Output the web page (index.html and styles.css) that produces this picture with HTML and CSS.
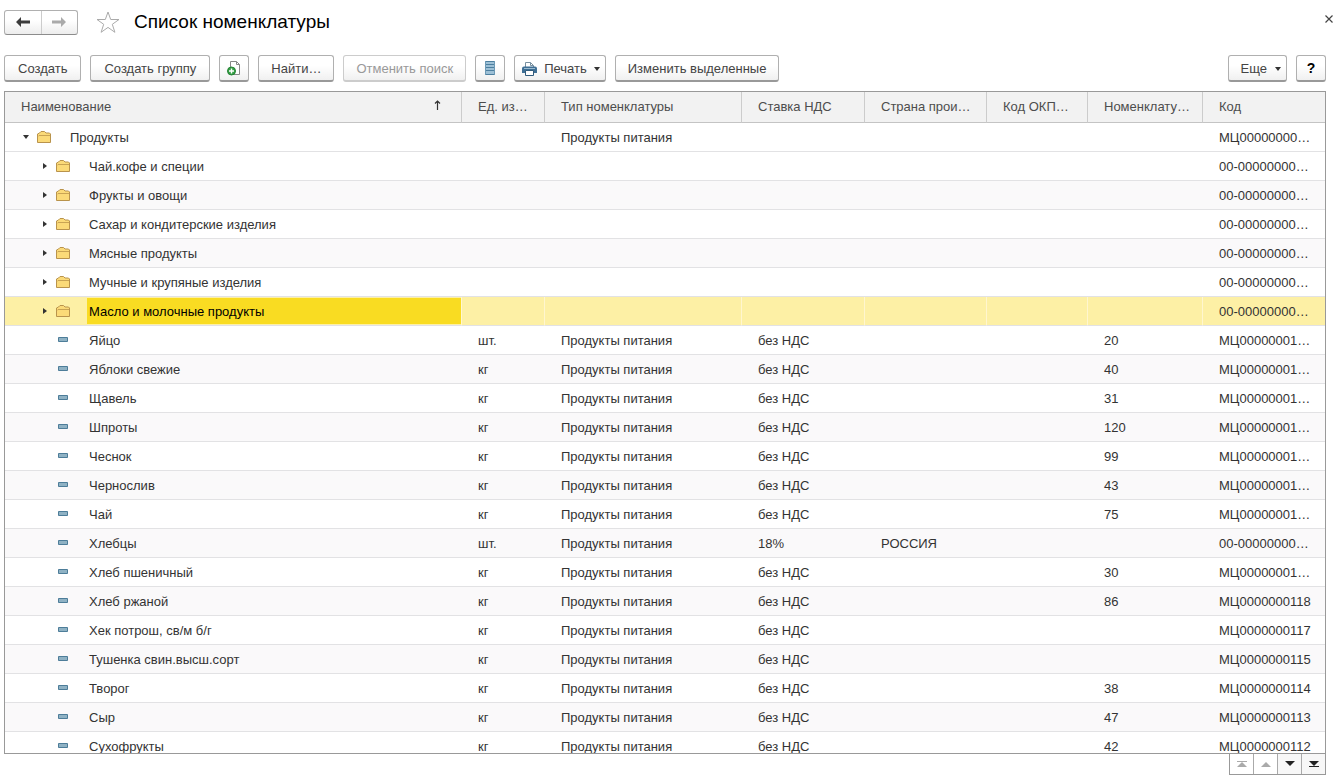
FILE: index.html
```html
<!DOCTYPE html>
<html lang="ru">
<head>
<meta charset="utf-8">
<title>Список номенклатуры</title>
<link rel="stylesheet" href="styles.css">
</head>
<body>
<svg class="sprite" aria-hidden="true">
  <symbol id="folder" viewBox="0 0 16 14">
    <path d="M1.500 12.500V4l2-1 1.500-1.500h3.500L10 3h3.500l1 1v8.500z" fill="#fbda78" stroke="#b9934c"/>
    <path d="M2 6.500l1-1h11" fill="none" stroke="#c9a454"/>
  </symbol>
  <symbol id="item" viewBox="0 0 10 5"><path d="M.5.5h9v4h-9z" fill="#8fb2c4" stroke="#4d7d99"/></symbol>
  <symbol id="right" viewBox="0 0 4 6"><path d="M0 0l4 3-4 3z" fill="#333"/></symbol>
  <symbol id="down" viewBox="0 0 6 4"><path d="M0 0h6L3 4z" fill="#333"/></symbol>
</svg>

<header class="titlebar">
  <div class="history">
    <button class="nav" aria-label="Назад"><svg width="14" height="10"><path d="M0 5l5-5v3.500h9v3H5V10z" fill="#3c3c3c"/></svg></button>
    <button class="nav" aria-label="Вперед" disabled><svg width="14" height="10"><path d="M14 5L9 0v3.500H0v3h9V10z" fill="#aaa"/></svg></button>
  </div>
  <button class="plain" aria-label="В избранное"><svg width="24" height="22"><path d="M12 1l2.700 7.500H23l-6.700 4.800 2.600 8L12 16.400l-6.900 4.900 2.600-8L1 8.500h8.300z" fill="#fff" stroke="#aaa"/></svg></button>
  <h1 class="title">Список номенклатуры</h1>
  <button class="plain close" aria-label="Закрыть"><svg width="8" height="8"><path d="M.5.5l7 7M7.500.5l-7 7" stroke="#444" stroke-width="1.200"/></svg></button>
</header>

<div class="toolbar">
  <button class="btn">Создать</button>
  <button class="btn">Создать группу</button>
  <button class="btn icon" aria-label="Создать копированием"><svg width="14" height="16"><path d="M3.500 14.500V1.500h6l3 3v10z" fill="#fff" stroke="#888"/><path d="M9.500 1.500v3h3" fill="none" stroke="#888"/><circle cx="4.500" cy="11" r="4" fill="#35a045" stroke="#248234"/><path d="M2 11h5M4.500 8.500v5" stroke="#fff" stroke-width="1.400"/></svg></button>
  <button class="btn">Найти…</button>
  <button class="btn" disabled>Отменить поиск</button>
  <button class="btn icon" aria-label="Список"><svg width="12" height="14"><path d="M1 0h10v14H1z" fill="#9dc0d6"/><path d="M1 .5h10M1 3.500h10M1 6.500h10M1 9.500h10M1 13.500h10" stroke="#4d7f9f"/><path d="M1.500 0v14M10.500 0v14" stroke="#6d9ab6"/></svg></button>
  <button class="btn menu print"><svg width="15" height="14"><path d="M3.500 5V.5h5l3 3V5" fill="#fff" stroke="#7890a0"/><path d="M8.500.5v3h3" fill="none" stroke="#7890a0"/><path d="M2 4.500h11a2 2 0 0 1 2 2V11H0V6.500a2 2 0 0 1 2-2z" fill="#3f6f95"/><path d="M2 6.500h11" stroke="#9bbbd0"/><path d="M3.500 8.500h8v5h-8z" fill="#fff" stroke="#315b7c"/></svg>Печать<svg class="caret" width="6" height="4"><use href="#down"/></svg></button>
  <button class="btn">Изменить выделенные</button>
  <button class="btn menu more">Еще<svg class="caret" width="6" height="4"><use href="#down"/></svg></button>
  <button class="btn icon help" aria-label="Справка">?</button>
</div>

<main class="frame">
<table class="list">
<colgroup><col><col class="c-unit"><col class="c-type"><col class="c-vat"><col class="c-land"><col class="c-okp"><col class="c-num"><col class="c-code"></colgroup>
<thead>
<tr><th><span class="sort">Наименование<svg width="7" height="12"><path d="M3.500 2v9M1 4.500l2.500-2.500L6 4.500" fill="none" stroke="#333" stroke-width="1.200"/></svg></span></th><th>Ед. из…</th><th>Тип номенклатуры</th><th>Ставка НДС</th><th>Страна прои…</th><th>Код ОКП…</th><th>Номенклату…</th><th>Код</th></tr>
</thead>
<tbody>
<tr><td class="name root"><div class="tree"><button class="toggle" aria-label="Свернуть"><svg width="6" height="4"><use href="#down"/></svg></button><svg class="kind" width="16" height="14"><use href="#folder"/></svg><span class="label">Продукты</span></div></td><td></td><td>Продукты питания</td><td></td><td></td><td></td><td></td><td>МЦ00000000…</td></tr>
<tr><td class="name"><div class="tree"><button class="toggle" aria-label="Развернуть"><svg width="4" height="6"><use href="#right"/></svg></button><svg class="kind" width="16" height="14"><use href="#folder"/></svg><span class="label">Чай.кофе и специи</span></div></td><td></td><td></td><td></td><td></td><td></td><td></td><td>00-00000000…</td></tr>
<tr><td class="name"><div class="tree"><button class="toggle" aria-label="Развернуть"><svg width="4" height="6"><use href="#right"/></svg></button><svg class="kind" width="16" height="14"><use href="#folder"/></svg><span class="label">Фрукты и овощи</span></div></td><td></td><td></td><td></td><td></td><td></td><td></td><td>00-00000000…</td></tr>
<tr><td class="name"><div class="tree"><button class="toggle" aria-label="Развернуть"><svg width="4" height="6"><use href="#right"/></svg></button><svg class="kind" width="16" height="14"><use href="#folder"/></svg><span class="label">Сахар и кондитерские изделия</span></div></td><td></td><td></td><td></td><td></td><td></td><td></td><td>00-00000000…</td></tr>
<tr><td class="name"><div class="tree"><button class="toggle" aria-label="Развернуть"><svg width="4" height="6"><use href="#right"/></svg></button><svg class="kind" width="16" height="14"><use href="#folder"/></svg><span class="label">Мясные продукты</span></div></td><td></td><td></td><td></td><td></td><td></td><td></td><td>00-00000000…</td></tr>
<tr><td class="name"><div class="tree"><button class="toggle" aria-label="Развернуть"><svg width="4" height="6"><use href="#right"/></svg></button><svg class="kind" width="16" height="14"><use href="#folder"/></svg><span class="label">Мучные и крупяные изделия</span></div></td><td></td><td></td><td></td><td></td><td></td><td></td><td>00-00000000…</td></tr>
<tr class="selected"><td class="name"><div class="tree"><button class="toggle" aria-label="Развернуть"><svg width="4" height="6"><use href="#right"/></svg></button><svg class="kind" width="16" height="14"><use href="#folder"/></svg><span class="label">Масло и молочные продукты</span></div></td><td></td><td></td><td></td><td></td><td></td><td></td><td>00-00000000…</td></tr>
<tr><td class="name"><div class="tree leaf"><svg class="kind" width="10" height="5"><use href="#item"/></svg><span class="label">Яйцо</span></div></td><td>шт.</td><td>Продукты питания</td><td>без НДС</td><td></td><td></td><td>20</td><td>МЦ00000001…</td></tr>
<tr><td class="name"><div class="tree leaf"><svg class="kind" width="10" height="5"><use href="#item"/></svg><span class="label">Яблоки свежие</span></div></td><td>кг</td><td>Продукты питания</td><td>без НДС</td><td></td><td></td><td>40</td><td>МЦ00000001…</td></tr>
<tr><td class="name"><div class="tree leaf"><svg class="kind" width="10" height="5"><use href="#item"/></svg><span class="label">Щавель</span></div></td><td>кг</td><td>Продукты питания</td><td>без НДС</td><td></td><td></td><td>31</td><td>МЦ00000001…</td></tr>
<tr><td class="name"><div class="tree leaf"><svg class="kind" width="10" height="5"><use href="#item"/></svg><span class="label">Шпроты</span></div></td><td>кг</td><td>Продукты питания</td><td>без НДС</td><td></td><td></td><td>120</td><td>МЦ00000001…</td></tr>
<tr><td class="name"><div class="tree leaf"><svg class="kind" width="10" height="5"><use href="#item"/></svg><span class="label">Чеснок</span></div></td><td>кг</td><td>Продукты питания</td><td>без НДС</td><td></td><td></td><td>99</td><td>МЦ00000001…</td></tr>
<tr><td class="name"><div class="tree leaf"><svg class="kind" width="10" height="5"><use href="#item"/></svg><span class="label">Чернослив</span></div></td><td>кг</td><td>Продукты питания</td><td>без НДС</td><td></td><td></td><td>43</td><td>МЦ00000001…</td></tr>
<tr><td class="name"><div class="tree leaf"><svg class="kind" width="10" height="5"><use href="#item"/></svg><span class="label">Чай</span></div></td><td>кг</td><td>Продукты питания</td><td>без НДС</td><td></td><td></td><td>75</td><td>МЦ00000001…</td></tr>
<tr><td class="name"><div class="tree leaf"><svg class="kind" width="10" height="5"><use href="#item"/></svg><span class="label">Хлебцы</span></div></td><td>шт.</td><td>Продукты питания</td><td>18%</td><td>РОССИЯ</td><td></td><td></td><td>00-00000000…</td></tr>
<tr><td class="name"><div class="tree leaf"><svg class="kind" width="10" height="5"><use href="#item"/></svg><span class="label">Хлеб пшеничный</span></div></td><td>кг</td><td>Продукты питания</td><td>без НДС</td><td></td><td></td><td>30</td><td>МЦ00000001…</td></tr>
<tr><td class="name"><div class="tree leaf"><svg class="kind" width="10" height="5"><use href="#item"/></svg><span class="label">Хлеб ржаной</span></div></td><td>кг</td><td>Продукты питания</td><td>без НДС</td><td></td><td></td><td>86</td><td>МЦ0000000118</td></tr>
<tr><td class="name"><div class="tree leaf"><svg class="kind" width="10" height="5"><use href="#item"/></svg><span class="label">Хек потрош, св/м б/г</span></div></td><td>кг</td><td>Продукты питания</td><td>без НДС</td><td></td><td></td><td></td><td>МЦ0000000117</td></tr>
<tr><td class="name"><div class="tree leaf"><svg class="kind" width="10" height="5"><use href="#item"/></svg><span class="label">Тушенка свин.высш.сорт</span></div></td><td>кг</td><td>Продукты питания</td><td>без НДС</td><td></td><td></td><td></td><td>МЦ0000000115</td></tr>
<tr><td class="name"><div class="tree leaf"><svg class="kind" width="10" height="5"><use href="#item"/></svg><span class="label">Творог</span></div></td><td>кг</td><td>Продукты питания</td><td>без НДС</td><td></td><td></td><td>38</td><td>МЦ0000000114</td></tr>
<tr><td class="name"><div class="tree leaf"><svg class="kind" width="10" height="5"><use href="#item"/></svg><span class="label">Сыр</span></div></td><td>кг</td><td>Продукты питания</td><td>без НДС</td><td></td><td></td><td>47</td><td>МЦ0000000113</td></tr>
<tr><td class="name"><div class="tree leaf"><svg class="kind" width="10" height="5"><use href="#item"/></svg><span class="label">Сухофрукты</span></div></td><td>кг</td><td>Продукты питания</td><td>без НДС</td><td></td><td></td><td>42</td><td>МЦ0000000112</td></tr>
</tbody>
</table>
</main>

<nav class="pager" aria-label="Прокрутка списка">
  <button disabled aria-label="В начало"><svg width="10" height="7"><path d="M0 .5h10" stroke="#aaa"/><path d="M0 6l5-5 5 5z" fill="#aaa"/></svg></button>
  <button disabled aria-label="Вверх"><svg width="10" height="6"><path d="M0 6l5-5 5 5z" fill="#aaa"/></svg></button>
  <button aria-label="Вниз"><svg width="10" height="6"><path d="M0 0h10L5 5z" fill="#222"/></svg></button>
  <button aria-label="В конец"><svg width="10" height="7"><path d="M0 0h10L5 5z" fill="#222"/><path d="M0 5.500h10" stroke="#222"/></svg></button>
</nav>
</body>
</html>
```
FILE: styles.css
```css
* { box-sizing: border-box; }

body {
  margin: 0;
  height: 100vh;
  padding: 9px 12px 6px 4px;
  display: flex;
  flex-direction: column;
  background: #fff;
  color: #333;
  font: 13px/16px "Liberation Sans", Arial, sans-serif;
}

button {
  font: inherit;
  color: inherit;
  padding: 0;
  border: 0;
  background: none;
  display: flex;
  align-items: center;
  justify-content: center;
}

svg { display: block; flex: none; }
.sprite { position: absolute; width: 0; height: 0; }

.titlebar { display: flex; align-items: center; height: 26px; }

.history {
  display: flex;
  width: 74px;
  height: 25px;
  border: 1px solid #b0b0b0;
  border-bottom-color: #8c8c8c;
  border-radius: 3px;
  background: linear-gradient(#fff 40%, #ededed);
}
.nav { flex: 1; }
.nav + .nav { border-left: 1px solid #ccc; }

.plain { margin-left: 18px; }
.title { margin: 0 0 0 14px; font-size: 19px; line-height: 24px; font-weight: 400; color: #000; }
.close { margin: 0 -11px 6px auto; padding: 4px; }

.toolbar { display: flex; gap: 9px; margin: 20px 0 9px; height: 27px; }

.btn {
  padding: 1px 12px 0;
  border: 1px solid #b0b0b0;
  border-bottom: 2px solid #999;
  border-radius: 3px;
  background: linear-gradient(#fff 40%, #f0f0f0);
  color: #444;
  white-space: nowrap;
}
.btn:first-child, .btn:nth-child(2) { padding: 1px 13px 0; }
.btn:disabled { color: #999; border-color: #ccc; }
.icon { width: 30px; padding: 0; }
.btn.menu { padding-right: 5px; }
.btn.print { padding-left: 7px; gap: 7px; }
.btn.more { margin-left: auto; gap: 8px; }
.help { color: #000; font-weight: 700; font-size: 14px; }

.frame {
  flex: 1;
  min-height: 0;
  overflow: hidden;
  border: 1px solid #999;
}

.list { width: 100%; table-layout: fixed; border-collapse: separate; border-spacing: 0; }
.c-unit { width: 83px; }
.c-type { width: 197px; }
.c-vat { width: 123px; }
.c-land { width: 122px; }
.c-okp { width: 101px; }
.c-num { width: 115px; }
.c-code { width: 122px; }

th, td { padding: 0 0 0 16px; text-align: left; white-space: nowrap; }
th {
  height: 31px;
  font-weight: 400;
  color: #4d4d4d;
  background: #f2f2f2;
  border-right: 1px solid #ccc;
  border-bottom: 1px solid #c4c4c4;
}
td { height: 29px; padding-top: 2px; border-bottom: 1px solid #e2e2e4; }
th:last-child { border-right: 0; }
.sort { display: flex; justify-content: space-between; padding-right: 20px; }

tbody tr:nth-child(odd) { background: #faf9fa; }
tbody tr:first-child { background: #fff; }

td.name { padding: 0; }
.tree { display: flex; align-items: center; height: 28px; padding-left: 34px; }
.root .tree { padding-left: 15px; }
.toggle { width: 12px; height: 16px; }
.kind { margin: 0 16px 0 4px; }
.leaf .kind { margin: 0 19px 2px; }
.label { flex: 1; padding: 2px 0 0 2px; line-height: 24px; }

tbody tr.selected { background: #fdf0a5; }
.selected td { border-right: 1px solid #fff6cf; }
.selected td:last-child { border-right: 0; }
.selected .label { background: #f9dc22; color: #000; }

.pager { display: flex; align-self: flex-end; height: 21px; border: 1px solid #999; border-top: 0; }
.pager button { width: 24px; background: #f7f7f7; }
.pager button:first-child { width: 23px; }
.pager button + button { border-left: 1px solid #aaa; }
.pager button:disabled { background: #fff; }
```
